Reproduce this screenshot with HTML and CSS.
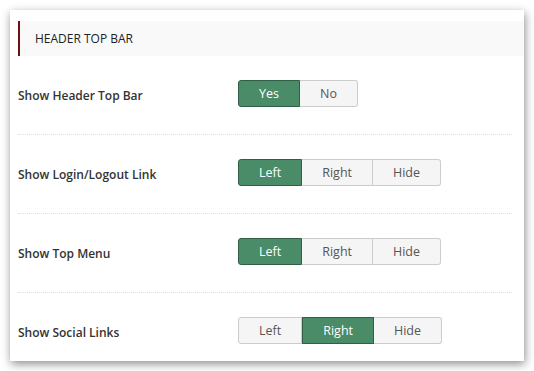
FILE: index.html
```html
<!DOCTYPE html>
<html lang="en">

<head>
  <meta charset="UTF-8">
  <meta name="viewport" content="width=device-width, initial-scale=1.0">
  <title>Header Top Bar</title>
  <link rel="stylesheet" href="styles.css">
</head>

<body>
  <div class="panel">
    <h3 class="section-title">HEADER TOP BAR</h3>
    <div class="option-row">
      <label class="option-label">Show Header Top Bar</label>
      <div class="btn-group">
        <button class="btn active">Yes</button>
        <button class="btn">No</button>
      </div>
    </div>
    <div class="option-row">
      <label class="option-label">Show Login/Logout Link</label>
      <div class="btn-group">
        <button class="btn active">Left</button>
        <button class="btn">Right</button>
        <button class="btn">Hide</button>
      </div>
    </div>
    <div class="option-row">
      <label class="option-label">Show Top Menu</label>
      <div class="btn-group">
        <button class="btn active">Left</button>
        <button class="btn">Right</button>
        <button class="btn">Hide</button>
      </div>
    </div>
    <div class="option-row last">
      <label class="option-label">Show Social Links</label>
      <div class="btn-group">
        <button class="btn">Left</button>
        <button class="btn active">Right</button>
        <button class="btn">Hide</button>
      </div>
    </div>
  </div>
</body>

</html>
```

FILE: styles.css
```css
*,
*::before,
*::after {
  margin: 0;
  padding: 0;
  box-sizing: border-box;
}
body {
  padding: 10px;
  background: #fff;
  font-family: "Open Sans", "Noto Sans", sans-serif;
}
.panel {
  width: 514px;
  height: 351px;
  padding: 11px 12px 0 8px;
  background: #fff;
  box-shadow: 1px 3px 9px rgba(0, 0, 0, 0.45);
}
.section-title {
  height: 35px;
  margin-right: -12px;
  padding-left: 15px;
  display: flex;
  align-items: center;
  border-left: 2px solid #6b1015;
  background: #f9f9f9;
  font-size: 12px;
  font-weight: 400;
  color: #222;
}
.option-row {
  display: flex;
  align-items: center;
  padding: 24px 0 27px;
  border-bottom: 1px dotted #ddd;
}
.option-row.last {
  border-bottom: none;
}
.option-label {
  width: 220px;
  padding-top: 3px;
  font-size: 12px;
  font-weight: 600;
  color: #333;
}
.btn-group {
  display: flex;
}
.btn {
  height: 27px;
  padding: 0 20px;
  font-family: inherit;
  font-size: 12.5px;
  color: #555;
  background: #f5f5f5;
  border: 1px solid #ccc;
  border-left: none;
  cursor: pointer;
}
.btn:first-child {
  border-left: 1px solid #ccc;
  border-radius: 3px 0 0 3px;
}
.btn:last-child {
  border-radius: 0 3px 3px 0;
}
.btn.active {
  color: #fff;
  background: #4a8b68;
  border: 1px solid #2f5f44;
}
```
